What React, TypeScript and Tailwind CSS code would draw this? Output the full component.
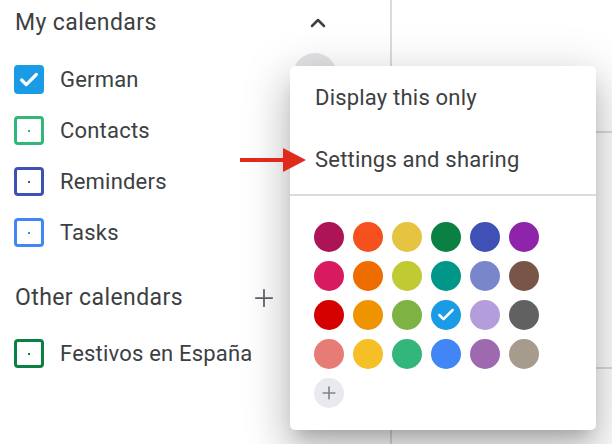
import { Check, ChevronUp, Plus } from 'lucide-react';

const MY_CALENDARS = [
  { name: 'German', color: '#1a9be6', checked: true },
  { name: 'Contacts', color: '#33b679', checked: false },
  { name: 'Reminders', color: '#3f51b5', checked: false },
  { name: 'Tasks', color: '#4285f4', checked: false },
];

const PALETTE = [
  ['#ad1457', '#f4511e', '#e4c441', '#0b8043', '#3f51b5', '#8e24aa'],
  ['#d81b60', '#ef6c00', '#c0ca33', '#009688', '#7986cb', '#795548'],
  ['#d50000', '#f09300', '#7cb342', '#1a9be6', '#b39ddb', '#616161'],
  ['#e67c73', '#f6bf26', '#33b679', '#4285f4', '#9e69af', '#a79b8e'],
];

function CalendarRow({ name, color, checked }: { name: string; color: string; checked: boolean }) {
  return (
    <div className="flex h-[51px] items-center pl-[14px]">
      {checked ? (
        <div className="flex h-[29px] w-[30px] items-center justify-center rounded-[4px]" style={{ backgroundColor: color }}>
          <Check className="h-[22px] w-[22px] text-white" strokeWidth={3.5} />
        </div>
      ) : (
        <div className="flex h-[29px] w-[30px] items-center justify-center rounded-[4px] border-[3px]" style={{ borderColor: color }}>
          <div className="h-[2px] w-[2px]" style={{ backgroundColor: color }} />
        </div>
      )}
      <span className="ml-[16px] text-[22px] tracking-[0.2px] text-[#3c4043]">{name}</span>
    </div>
  );
}

function ColorMenu() {
  return (
    <div className="absolute left-[290px] top-[66px] h-[364px] w-[306px] rounded-[5px] bg-white shadow-[0_11px_15px_-7px_rgba(0,0,0,0.2),0_24px_38px_3px_rgba(0,0,0,0.14),0_9px_46px_8px_rgba(0,0,0,0.12)]">
      <div className="flex h-[62px] items-center pl-[25px] text-[22px] tracking-[0.2px] text-[#3c4043]">Display this only</div>
      <div className="flex h-[62px] items-center pl-[25px] text-[22px] tracking-[0.2px] text-[#3c4043]">Settings and sharing</div>
      <div className="mt-[4px] h-[2px] bg-[#dadce0]" />
      <div className="flex flex-col gap-[9px] pl-[24px] pt-[26px]">
        {PALETTE.map((row, r) => (
          <div key={r} className="flex gap-[9px]">
            {row.map((c) => (
              <div key={c} className="flex h-[30px] w-[30px] items-center justify-center rounded-full" style={{ backgroundColor: c }}>
                {c === '#1a9be6' && <Check className="h-[20px] w-[20px] text-white" strokeWidth={3} />}
              </div>
            ))}
          </div>
        ))}
        <div className="flex h-[30px] w-[30px] items-center justify-center rounded-full bg-[#e8eaed]">
          <Plus className="h-[20px] w-[20px] text-[#80868b]" strokeWidth={2} />
        </div>
      </div>
    </div>
  );
}

export default function App() {
  return (
    <div className="relative flex h-[444px] w-[612px] overflow-hidden bg-white font-['Roboto',sans-serif]">
      <aside className="w-[392px] border-r-2 border-[#dadce0]">
        <div className="flex h-[46px] items-center justify-between pl-[15px] pr-[60px]">
          <span className="text-[23px] tracking-[0.4px] text-[#3c4043]">My calendars</span>
          <ChevronUp className="h-[24px] w-[24px] text-[#3c4043]" strokeWidth={2.5} />
        </div>
        <div className="mt-[8px]">
          {MY_CALENDARS.map((c) => (
            <CalendarRow key={c.name} {...c} />
          ))}
        </div>
        <div className="mt-[18px] flex h-[44px] items-center justify-between pl-[15px] pr-[112px]">
          <span className="text-[23px] tracking-[0.4px] text-[#3c4043]">Other calendars</span>
          <Plus className="h-[28px] w-[28px] text-[#5f6368]" strokeWidth={1.5} />
        </div>
        <div className="mt-[8px]">
          <CalendarRow name="Festivos en España" color="#0b8043" checked={false} />
        </div>
      </aside>

      <main className="flex flex-1 flex-col">
        <div className="h-[133px] border-b-2 border-[#dadce0]" />
        <div className="h-[236px] border-b-2 border-[#dadce0]" />
      </main>

      {/* hover ripple behind the menu's corner */}
      <div className="absolute left-[293px] top-[53px] h-[44px] w-[44px] rounded-full bg-[#e4e4e6]" />

      <ColorMenu />

      {/* red pointer arrow */}
      <svg className="absolute left-[238px] top-[146px]" width="70" height="28" viewBox="0 0 70 28">
        <rect x="2" y="12" width="48" height="4" fill="#e12a1c" />
        <polygon points="45,2 68,14 45,26" fill="#e12a1c" />
      </svg>
    </div>
  );
}
